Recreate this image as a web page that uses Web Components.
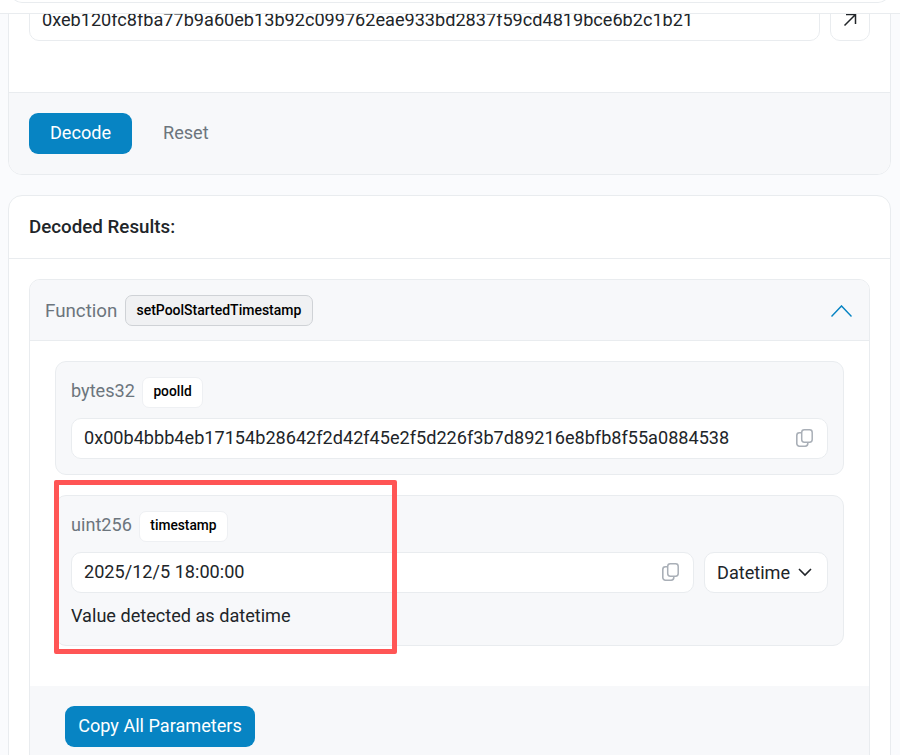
<!DOCTYPE html>
<html lang="en"><head><meta charset="utf-8"><title>Decoded Results</title>
<style>
html,body{margin:0;padding:0;height:755px;overflow:hidden;background:#fafbfd;font-family:Roboto,"Liberation Sans",sans-serif;color:#212529;font-size:18.125px}
</style></head><body>
<template id="t-strip"><style>
:host{display:block;height:13px;background:#fff;border-bottom:1px solid #e9ecef;position:relative;z-index:2;overflow:hidden}
.edge{height:2px;margin:0 10px;margin-top:-14px;padding-top:14px;border:1px solid #e9ecef;border-top:0;border-radius:0 0 12px 12px}
</style><div class="edge"></div></template>

<template id="t-card"><style>
:host{display:block;margin:0 9px 0 8px;background:#fff;border:1px solid #e9ecef;border-radius:14px;overflow:hidden}
</style><slot></slot></template>

<template id="t-input"><style>
:host{display:flex;align-items:center;flex:1;min-width:0;height:var(--h,39px);padding:0 14.5px 0 12px;background:#fff;border:1px solid #e9ecef;border-radius:10px;white-space:nowrap;line-height:1;gap:8px}
.t{flex:1;min-width:0}
.i{display:flex;margin-top:-2px}
</style><span class="t"><slot></slot></span><span class="i"><slot name="icon"></slot></span></template>

<template id="t-btn"><style>
:host{display:inline-flex;align-items:center;justify-content:center;height:41px;padding-bottom:2px;background:#0784c3;color:#fff;border-radius:9px;font-size:18.125px;font-weight:450;padding-left:var(--px,21px);padding-right:var(--px,21px);box-sizing:border-box;width:var(--w,auto)}
:host([plain]){background:transparent;color:#6c757d;padding-left:20px;font-weight:400}
</style><slot></slot></template>

<template id="t-badge"><style>
:host{display:inline-flex;align-items:center;height:29px;padding:0 10.5px;background:#fff;border:1px solid #eef0f3;border-radius:7px;color:#000;font-size:13.75px;font-weight:500;line-height:1}
:host([dark]){background:#f0f1f3;border-color:#cfd2d6;height:29px;font-size:14px;padding:0 11px 0 10px}
</style><slot></slot></template>

<template id="t-param"><style>
:host{display:block;background:#f7f8fa;border:1px solid #e9ecef;border-radius:11px;padding:15px;box-sizing:border-box}
.head{display:flex;align-items:center;gap:7px;height:30px;margin-bottom:11px;color:#6c757d}
.ty{margin-bottom:3px}
</style><div class="head"><span class="ty"><slot name="type"></slot></span><slot name="name"></slot></div><slot></slot></template>

<template id="t-copy"><style>
:host{display:inline-flex}
</style><svg width="17" height="18" viewBox="0 0 17 18" fill="none" stroke="#a9afb7" stroke-linejoin="round"><rect x="5.7" y="0.8" width="10.5" height="12.4" rx="2.6" stroke-width="1.5"/><path d="M5.2 3.8H3.4A2.6 2.6 0 0 0 .8 6.4v8.2A2.6 2.6 0 0 0 3.4 17.2h5.8a2.6 2.6 0 0 0 2.6-2.6v-1" stroke-width="1.6"/></svg></template>

<x-strip></x-strip>
<x-card id="c1" style="margin-top:-35px">
  <div style="padding:20px 20px 51px;display:flex;gap:10px">
    <x-input>0xeb120fc8fba77b9a60eb13b92c099762eae933bd2837f59cd4819bce6b2c1b21</x-input>
    <div style="width:38px;height:39px;border:1px solid #e9ecef;border-radius:10px;display:flex;align-items:center;justify-content:center;flex:none">
      <svg width="14" height="14" viewBox="0 0 14 14" fill="none" stroke="#212529" stroke-width="1.5" style="margin-bottom:1px"><path d="M1.5 12.5 12 2M3 1.5h9.5V11"/></svg>
    </div>
  </div>
  <div style="background:#f7f8fa;border-top:1px solid #e9ecef;padding:20px;display:flex;align-items:center;gap:11px;height:41px">
    <x-btn style="--w:103px;--px:0px">Decode</x-btn><x-btn plain>Reset</x-btn>
  </div>
</x-card>
<x-card style="margin-top:20px">
  <div style="font-weight:500;font-size:18.75px;height:62px;display:flex;align-items:center;padding-left:20px;border-bottom:1px solid #e9ecef">Decoded Results:</div>
  <div style="padding:20px">
    <div style="border:1px solid #e9ecef;border-radius:11px;overflow:hidden">
      <div style="background:#f7f8fa;height:60px;border-bottom:1px solid #e9ecef;display:flex;align-items:center;padding:0 17px 0 15px;gap:8px;color:#6c757d;font-size:18.75px">
        <span style="margin-top:2px">Function</span><x-badge dark>setPoolStartedTimestamp</x-badge>
        <svg style="margin-left:auto;margin-top:2px" width="21" height="12" viewBox="0 0 21 12" fill="none" stroke="#0784c3" stroke-width="1.4"><path d="M.5 11.5 10.5.9l10 10.6"/></svg>
      </div>
      <div style="padding:20px 25px 40px;display:flex;flex-direction:column;gap:20px">
        <x-param><span slot="type">bytes32</span><x-badge slot="name">poolId</x-badge>
          <x-input>0x00b4bbb4eb17154b28642f2d42f45e2f5d226f3b7d89216e8bfb8f55a0884538<x-copy slot="icon"></x-copy></x-input></x-param>
        <x-param style="height:151px"><span slot="type">uint256</span><x-badge slot="name">timestamp</x-badge>
          <div style="display:flex;gap:10px">
            <x-input>2025/12/5 18:00:00<x-copy slot="icon"></x-copy></x-input>
            <div style="flex:none;width:110px;padding-left:12px;height:39px;background:#fff;border:1px solid #e9ecef;border-radius:10px;display:flex;align-items:center;gap:8px">Datetime
              <svg width="14" height="9" viewBox="0 0 14 9" fill="none" stroke="#212529" stroke-width="1.6"><path d="M1 1l6 6 6-6"/></svg></div>
          </div>
          <div style="margin-top:12px">Value detected as datetime</div>
        </x-param>
      </div>
      <div style="background:#f7f8fa;padding:20px 35px;--px:0px;--w:190px"><x-btn>Copy All Parameters</x-btn></div>
    </div>
  </div>
</x-card>
<x-mark></x-mark>
<script>
const reg=(n,id)=>customElements.define(n,class extends HTMLElement{connectedCallback(){if(!this.shadowRoot){this.attachShadow({mode:'open'}).append(document.getElementById(id).content.cloneNode(true));}}});
reg('x-strip','t-strip');reg('x-card','t-card');reg('x-input','t-input');reg('x-btn','t-btn');reg('x-badge','t-badge');reg('x-param','t-param');reg('x-copy','t-copy');
customElements.define('x-mark',class extends HTMLElement{connectedCallback(){const s=this.attachShadow({mode:'open'});s.innerHTML='<style>:host{display:block;position:absolute;left:54px;top:480px;width:333px;height:164px;border:5px solid #ff5555;border-radius:2px;z-index:3;pointer-events:none}</style>';}});
</script>
</body></html>
